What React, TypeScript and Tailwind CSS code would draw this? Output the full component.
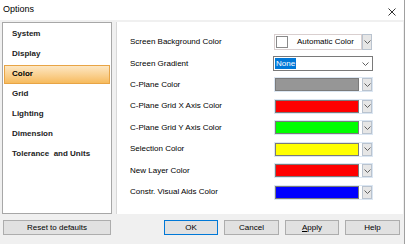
import React from "react";

const pages = ["System", "Display", "Color", "Grid", "Lighting", "Dimension", "Tolerance  and Units"];

const colorRows = [
  { label: "C-Plane Color", color: "#969696" },
  { label: "C-Plane Grid X Axis Color", color: "#ff0000" },
  { label: "C-Plane Grid Y Axis Color", color: "#00ff00" },
  { label: "Selection Color", color: "#ffff00" },
  { label: "New Layer Color", color: "#ff0000" },
  { label: "Constr. Visual Aids Color", color: "#0000ff" },
];

function Chevron() {
  return (
    <svg width="7" height="4" viewBox="0 0 7 4" className="block">
      <polyline points="0.5,0.5 3.5,3.5 6.5,0.5" fill="none" stroke="#606060" strokeWidth="1" />
    </svg>
  );
}

function DropButton() {
  return (
    <div className="w-[10px] h-full flex items-center justify-center bg-[#e6e6e6] border border-[#b9c3cf]">
      <Chevron />
    </div>
  );
}

function ColorPicker({ color }: { color: string }) {
  return (
    <div className="flex h-[15px] w-[99px] gap-[3px] border border-[#dbe6f2] p-0">
      <div className="flex-1 border border-[#7a7a7a]" style={{ backgroundColor: color }} />
      <DropButton />
    </div>
  );
}

function Button({ children, primary, className = "" }: { children: React.ReactNode; primary?: boolean; className?: string }) {
  return (
    <div
      className={`h-[15px] flex items-center justify-center text-[8px] bg-[#e1e1e1] border ${
        primary ? "border-[#0078d7]" : "border-[#adadad]"
      } ${className}`}
    >
      {children}
    </div>
  );
}

export default function App() {
  return (
    <div className="w-[405px] h-[244px] bg-[#f0f0f0] text-black font-['Liberation_Sans',Arial,sans-serif] flex flex-col border-r border-[#a0a0a0] overflow-hidden">
      {/* Title bar */}
      <div className="h-[20px] bg-white flex items-center justify-between pl-[3px] pr-[8px] shrink-0">
        <span className="text-[9px]">Options</span>
        <svg width="8" height="8" viewBox="0 0 8 8" className="mt-[3px]">
          <path d="M0.5 0.5 L7.5 7.5 M7.5 0.5 L0.5 7.5" stroke="#333" strokeWidth="1" />
        </svg>
      </div>

      {/* Body */}
      <div className="flex gap-[4px] pl-[2px] pr-[1px] pt-[2px] h-[194px]">
        {/* Page list */}
        <div className="w-[110px] bg-white border border-[#a7a7a7] pt-[1px] flex flex-col">
          {pages.map((p) => (
            <div key={p} className="h-[20px] flex items-center px-[1px]">
              {p === "Color" ? (
                <div className="w-full h-[19px] flex items-center pl-[7px] text-[8px] font-bold border border-[#e8a445] bg-gradient-to-b from-[#fde7c2] to-[#f6bb5c]">
                  {p}
                </div>
              ) : (
                <span className="pl-[8px] text-[8px] font-bold text-[#222] whitespace-pre">{p}</span>
              )}
            </div>
          ))}
        </div>

        {/* Settings panel */}
        <div className="flex-1 bg-white border-l border-[#d8d8d8] pt-[12px] pl-[13px] flex flex-col text-[8px]">
          <div className="flex items-center h-[16px]">
            <span className="w-[144px]">Screen Background Color</span>
            <div className="flex h-[16px] gap-0">
              <div className="w-[88px] flex items-center border border-[#d9cfcf] pl-[1px]">
                <div className="w-[12px] h-[12px] bg-white border border-[#8a8a8a]" />
                <span className="ml-[9px]">Automatic Color</span>
              </div>
              <DropButton />
            </div>
          </div>

          <div className="flex items-center h-[15px] mt-[6px]">
            <span className="w-[143px]">Screen Gradient</span>
            <div className="w-[100px] h-[15px] flex items-center justify-between border border-[#7a7a7a] pl-[1px] pr-[3px]">
              <span className="bg-[#0078d7] text-white px-[1px] leading-[11px]">None</span>
              <Chevron />
            </div>
          </div>

          <div className="flex flex-col gap-[6.5px] mt-[6px]">
            {colorRows.map((r) => (
              <div key={r.label} className="flex items-center h-[15px]">
                <span className="w-[144px]">{r.label}</span>
                <ColorPicker color={r.color} />
              </div>
            ))}
          </div>
        </div>
      </div>

      {/* Footer buttons */}
      <div className="flex items-center pl-[3px] pr-[4px] pt-[6px]">
        <Button className="w-[108px]">Reset to defaults</Button>
        <div className="ml-auto flex gap-[6px]">
          <Button primary className="w-[54px]">OK</Button>
          <Button className="w-[55px]">Cancel</Button>
          <Button className="w-[54px]">
            <span>
              <span className="underline">A</span>pply
            </span>
          </Button>
          <Button className="w-[55px]">Help</Button>
        </div>
      </div>
    </div>
  );
}
